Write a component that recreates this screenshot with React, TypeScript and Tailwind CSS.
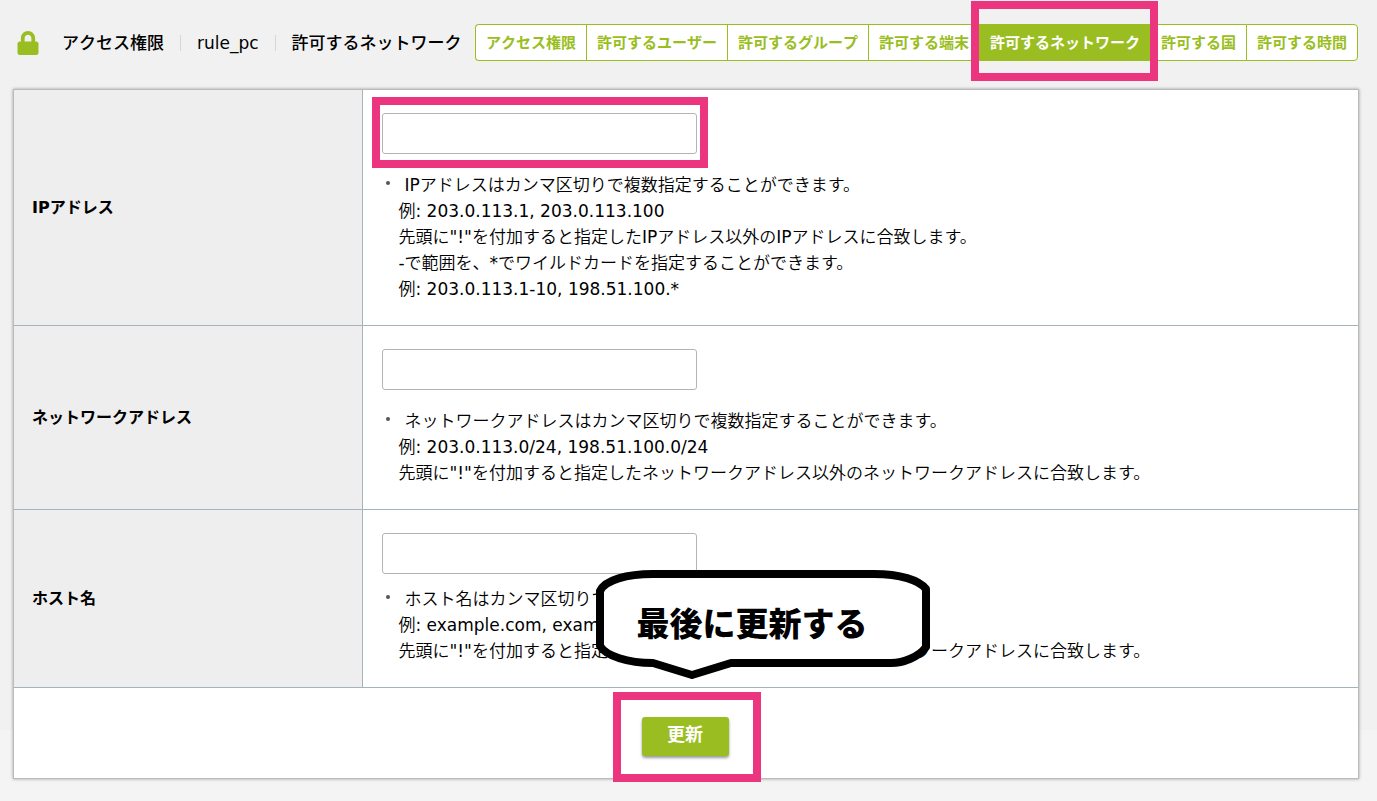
import { FaLock } from 'react-icons/fa'

const tabs = [
  { label: 'アクセス権限' },
  { label: '許可するユーザー' },
  { label: '許可するグループ' },
  { label: '許可する端末' },
  { label: '許可するネットワーク', active: true },
  { label: '許可する国' },
  { label: '許可する時間' },
]

const fields = [
  {
    id: 'ip_address',
    label: 'IPアドレス',
    marked: true,
    gap: 'mt-[18px]',
    notes: [
      'IPアドレスはカンマ区切りで複数指定することができます。',
      '例: 203.0.113.1, 203.0.113.100',
      '先頭に"!"を付加すると指定したIPアドレス以外のIPアドレスに合致します。',
      '-で範囲を、*でワイルドカードを指定することができます。',
      '例: 203.0.113.1-10, 198.51.100.*',
    ],
  },
  {
    id: 'network_address',
    label: 'ネットワークアドレス',
    marked: false,
    gap: 'mt-[18px]',
    notes: [
      'ネットワークアドレスはカンマ区切りで複数指定することができます。',
      '例: 203.0.113.0/24, 198.51.100.0/24',
      '先頭に"!"を付加すると指定したネットワークアドレス以外のネットワークアドレスに合致します。',
    ],
  },
  {
    id: 'host_name',
    label: 'ホスト名',
    marked: false,
    gap: 'mt-3',
    notes: [
      'ホスト名はカンマ区切りで複数指定することができます。',
      '例: example.com, example.jp',
      '先頭に"!"を付加すると指定したネットワークアドレス以外のネットワークアドレスに合致します。',
    ],
  },
]

const Frame = ({ className }: { className: string }) => (
  <span className={`pointer-events-none absolute z-10 border-8 border-[#eb367f] ${className}`} />
)

const Bubble = () => (
  <div className="pointer-events-none absolute -left-[49px] -top-[150px] h-[116px] w-[341px]">
    <svg viewBox="0 0 341 116" className="absolute inset-0 h-full w-full" aria-hidden="true">
      <path
        d="M60 7H281C307 7 326 13 333 22V80C326 90 310 96 298 96H138L99 108L60 96C35 96 13 89 7 79V24C12 13 34 7 60 7Z"
        fill="#fff"
        stroke="#000"
        strokeWidth="8"
        strokeLinejoin="round"
      />
    </svg>
    <p className="relative whitespace-nowrap pl-11 pt-[38px] text-left text-[33px] font-black leading-10 text-black">
      最後に更新する
    </p>
  </div>
)

const App = () => {
  return (
    <div className="min-h-screen bg-[linear-gradient(#f1f1f1_730px,#f4f4f4_730px)] pb-[22px] font-['DejaVu_Sans','Noto_Sans_CJK_JP',sans-serif] text-black">
      <header className="flex items-center justify-between pb-7 pl-4 pr-[19px] pt-6 [font-kerning:none]">
        <div className="flex items-center whitespace-nowrap text-[17px] font-medium leading-6">
          <FaLock className="h-6 w-6 text-[#9abe22]" />
          <span className="ml-[22px]">アクセス権限</span>
          <span className="ml-4 h-4 w-px bg-[#d6d6d6]" />
          <span className="ml-4">rule_pc</span>
          <span className="ml-4 h-4 w-px bg-[#d6d6d6]" />
          <h1 className="ml-4">許可するネットワーク</h1>
        </div>
        <nav className="flex">
          {tabs.map((tab) => (
            <a
              key={tab.label}
              href="#"
              className={`relative whitespace-nowrap border-y border-l border-[#9abe22] px-[10px] pb-[5px] pt-[6px] text-[15px] font-bold leading-6 first:rounded-l last:rounded-r last:border-r ${
                tab.active ? 'bg-[#9abe22] text-white' : 'bg-white text-[#9abe22]'
              }`}
            >
              {tab.label}
              {tab.active && <Frame className="-bottom-[21px] -left-[9px] -right-2 -top-6" />}
            </a>
          ))}
        </nav>
      </header>

      <form className="ml-[13px] mr-[18px] border border-[#bbbbbb] bg-white shadow-[0_0_3px_rgba(0,0,0,0.35)]">
        <table className="w-full border-separate border-spacing-0">
          <tbody>
            {fields.map((field) => (
              <tr key={field.id}>
                <th className="w-[26%] border-b border-r border-[#a5b4bb] bg-[#eeeeee] pl-[18px] text-left text-[16px] font-bold [font-kerning:none]">
                  <label htmlFor={field.id}>{field.label}</label>
                </th>
                <td className="border-b border-[#a5b4bb] px-[19px] py-[23px]">
                  <div className="relative h-[41px] w-[315px]">
                    <input
                      id={field.id}
                      type="text"
                      className="h-full w-full rounded-[3px] border border-[#b4b4b4] bg-white px-2 outline-none"
                    />
                    {field.marked && <Frame className="-bottom-[14px] -left-[10px] -right-[11px] -top-4" />}
                  </div>
                  <div
                    className={`${field.gap} font-['DejaVu_Sans','Noto_Sans_CJK_JP_DemiLight','Noto_Sans_CJK_JP',sans-serif] text-[17px] leading-[26px]`}
                  >
                    {field.notes.map((note, i) => (
                      <p key={i} className={i === 0 ? 'flex' : 'pl-4'}>
                        {i === 0 && <span className="ml-1 mr-[14px] mt-[9px] h-1 w-1 shrink-0 rounded-full bg-[#555555]" />}
                        {note}
                      </p>
                    ))}
                  </div>
                </td>
              </tr>
            ))}
          </tbody>
        </table>
        <div className="flex justify-center pb-[22px] pr-0.5 pt-[29px]">
          <div className="relative">
            <button
              type="button"
              className="block h-[39px] w-[87px] rounded-[3px] bg-[#9abe22] pb-1 text-[18px] font-bold leading-6 text-white shadow-[0_2px_3px_rgba(0,0,0,0.4)]"
            >
              更新
            </button>
            <Frame className="-bottom-[26px] -left-[29px] -right-8 -top-[25px]" />
            <Bubble />
          </div>
        </div>
      </form>
    </div>
  )
}

export default App
